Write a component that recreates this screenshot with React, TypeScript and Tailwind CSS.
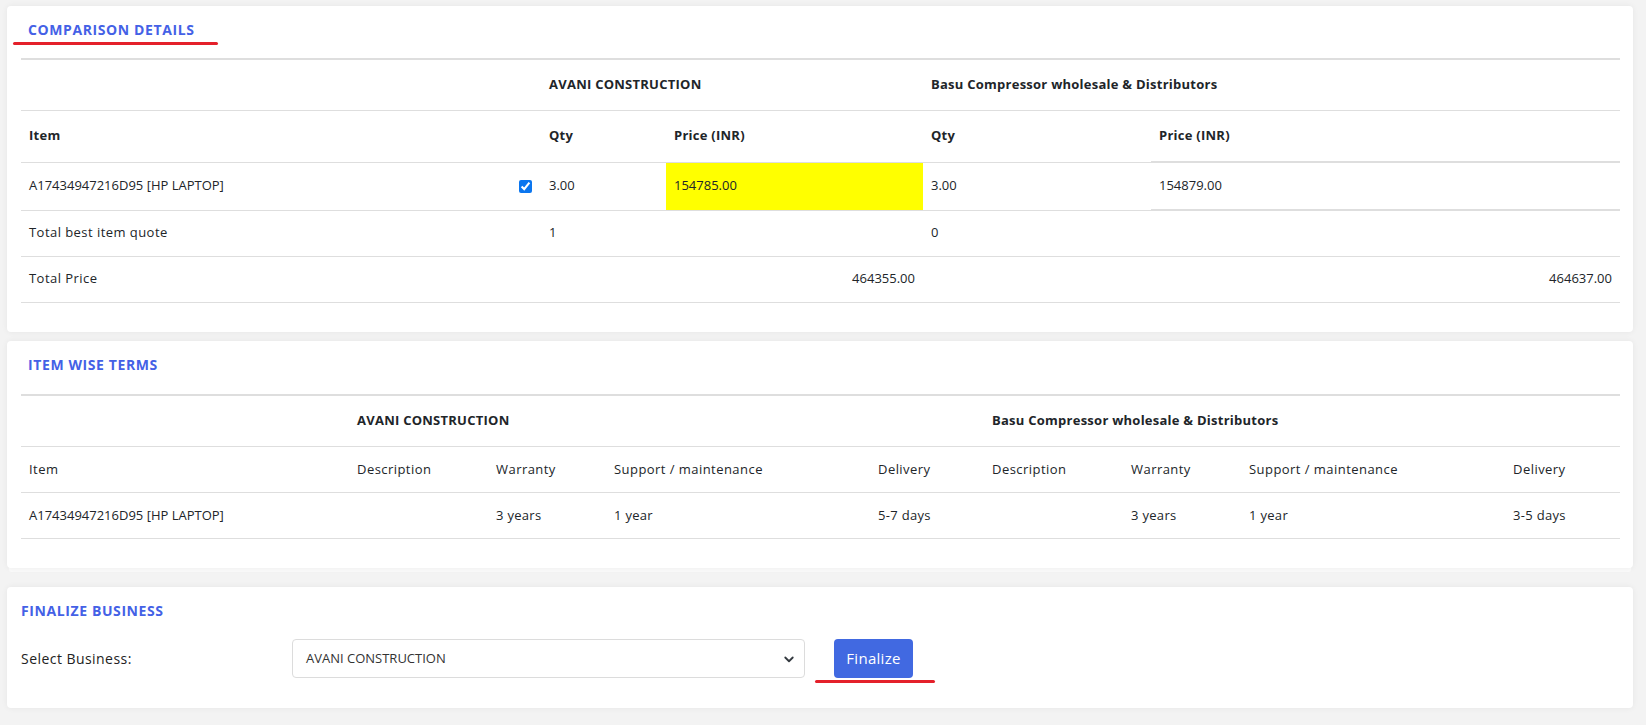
import React from "react";

const font = { fontFamily: '"Open Sans", "Liberation Sans", sans-serif' };

function ChevronDown() {
  return (
    <svg width="12" height="12" viewBox="0 0 16 16" fill="none">
      <path d="M3 6l5 5 5-5" stroke="#343a40" strokeWidth="2.4" strokeLinecap="round" strokeLinejoin="round" />
    </svg>
  );
}

export default function App() {
  return (
    <div style={font} className="w-[1646px] min-h-[725px] bg-[#f3f3f3] pl-[7px] pr-[13px] pt-[6px] pb-[17px] text-[#212529]">
      {/* Card 1 */}
      <div className="relative bg-white rounded-[4px] shadow-[0_0_6px_rgba(0,0,0,0.06)] pl-[14px] pr-[13px] pt-[13px] pb-[29px]">
        <div className="h-[21px] leading-[21px] text-[14px] font-bold tracking-[0.6px] text-[#4461e6] pl-[7px] mb-[18px]">COMPARISON DETAILS</div>
        <div className="absolute left-[6px] top-[36px] w-[205px] h-[3px] rounded-full bg-[#e4202a]" />
        <table className="w-full table-fixed border-collapse text-[13px]">
          <colgroup>
            <col className="w-[520px]" />
            <col className="w-[125px]" />
            <col className="w-[257px]" />
            <col className="w-[228px]" />
            <col />
          </colgroup>
          <tbody>
            <tr className="h-[51px] border-t-2 border-[#dedede] font-bold tracking-[0.25px]">
              <td className="px-2"></td>
              <td className="px-2" colSpan={2}>AVANI CONSTRUCTION</td>
              <td className="px-2" colSpan={2}>Basu Compressor wholesale &amp; Distributors</td>
            </tr>
            <tr className="h-[52px] border-t border-[#dedede] font-bold tracking-[0.25px]">
              <td className="px-2">Item</td>
              <td className="px-2">Qty</td>
              <td className="px-2">Price (INR)</td>
              <td className="px-2">Qty</td>
              <td className="px-2">Price (INR)</td>
            </tr>
            <tr className="h-[48px] border-t border-[#dedede]">
              <td className="pl-2 pr-[9px]">
                <div className="flex items-center justify-between">
                  <span>A17434947216D95 [HP LAPTOP]</span>
                  <input type="checkbox" defaultChecked readOnly className="w-[13px] h-[13px] m-0 accent-[#0b76ef]" />
                </div>
              </td>
              <td className="px-2">3.00</td>
              <td className="px-2 bg-[#ffff00]">154785.00</td>
              <td className="px-2">3.00</td>
              <td className="px-2 border-y-2 border-[#dedede]">154879.00</td>
            </tr>
            <tr className="h-[46px] border-t border-[#dedede]">
              <td className="px-2 tracking-[0.45px]">Total best item quote</td>
              <td className="px-2">1</td>
              <td className="px-2"></td>
              <td className="px-2">0</td>
              <td className="px-2"></td>
            </tr>
            <tr className="h-[46px] border-y border-[#dedede]">
              <td className="px-2 tracking-[0.45px]">Total Price</td>
              <td className="px-2 text-right" colSpan={2}>464355.00</td>
              <td className="px-2 text-right" colSpan={2}>464637.00</td>
            </tr>
          </tbody>
        </table>
      </div>

      {/* Card 2 */}
      <div className="mt-[9px] bg-white rounded-[4px] shadow-[0_0_6px_rgba(0,0,0,0.06),0_6px_0_-2px_#fafafa] pl-[14px] pr-[13px] pt-[13px] pb-[29px]">
        <div className="h-[21px] leading-[21px] text-[14px] font-bold tracking-[0.6px] text-[#4461e6] pl-[7px] mb-[19px]">ITEM WISE TERMS</div>
        <table className="w-full table-fixed border-collapse text-[13px]">
          <colgroup>
            <col className="w-[328px]" />
            <col className="w-[139px]" />
            <col className="w-[118px]" />
            <col className="w-[264px]" />
            <col className="w-[114px]" />
            <col className="w-[139px]" />
            <col className="w-[118px]" />
            <col className="w-[264px]" />
            <col />
          </colgroup>
          <tbody>
            <tr className="h-[52px] border-t-2 border-[#dedede] font-bold tracking-[0.25px]">
              <td className="px-2"></td>
              <td className="px-2" colSpan={4}>AVANI CONSTRUCTION</td>
              <td className="px-2" colSpan={4}>Basu Compressor wholesale &amp; Distributors</td>
            </tr>
            <tr className="h-[46px] border-t border-[#dedede] tracking-[0.45px]">
              <td className="px-2">Item</td>
              <td className="px-2">Description</td>
              <td className="px-2">Warranty</td>
              <td className="px-2">Support / maintenance</td>
              <td className="px-2">Delivery</td>
              <td className="px-2">Description</td>
              <td className="px-2">Warranty</td>
              <td className="px-2">Support / maintenance</td>
              <td className="px-2">Delivery</td>
            </tr>
            <tr className="h-[46px] border-y border-[#dedede] tracking-[0.3px]">
              <td className="px-2 tracking-normal">A17434947216D95 [HP LAPTOP]</td>
              <td className="px-2"></td>
              <td className="px-2">3 years</td>
              <td className="px-2">1 year</td>
              <td className="px-2">5-7 days</td>
              <td className="px-2"></td>
              <td className="px-2">3 years</td>
              <td className="px-2">1 year</td>
              <td className="px-2">3-5 days</td>
            </tr>
          </tbody>
        </table>
      </div>

      {/* Card 3 */}
      <div className="mt-[19px] bg-white rounded-[4px] shadow-[0_0_6px_rgba(0,0,0,0.06)] pl-[14px] pr-[13px] pt-[13px] pb-[30px]">
        <div className="h-[21px] leading-[21px] text-[14px] font-bold tracking-[0.6px] text-[#4461e6] mb-[18px]">FINALIZE BUSINESS</div>
        <div className="flex items-center">
          <div className="w-[271px] text-[14px] font-medium tracking-[0.45px] text-[#222]">Select Business:</div>
          <div className="w-[513px] h-[39px] border border-[#dcdcdc] rounded-[4px] flex items-center justify-between pl-[13px] pr-[9px] text-[13px] text-[#333]">
            <span>AVANI CONSTRUCTION</span>
            <ChevronDown />
          </div>
          <div className="relative ml-[29px]">
            <button className="w-[79px] h-[39px] bg-[#4169e1] rounded-[4px] text-white text-[15px] tracking-[0.3px]">Finalize</button>
            <div className="absolute left-[-19px] top-[41px] w-[120px] h-[3px] rounded-full bg-[#e4202a]" />
          </div>
        </div>
      </div>
    </div>
  );
}
